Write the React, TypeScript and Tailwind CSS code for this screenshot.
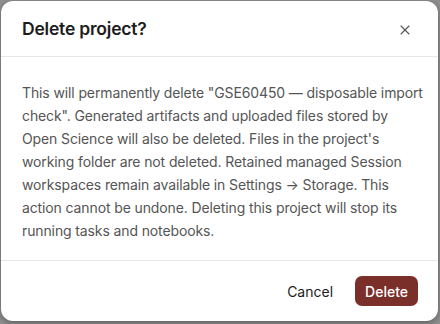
import { X } from "lucide-react";

const lines = [
  'This will permanently delete "GSE60450 — disposable import',
  'check". Generated artifacts and uploaded files stored by',
  "Open Science will also be deleted. Files in the project's",
  "working folder are not deleted. Retained managed Session",
  "workspaces remain available in Settings → Storage. This",
  "action cannot be undone. Deleting this project will stop its",
  "running tasks and notebooks.",
];

const App = () => {
  return (
    <div className="w-[440px] h-[324px] bg-[#8f8f8f] pt-px pl-px overflow-hidden font-['Inter',sans-serif]">
      <div className="w-[437px] h-[320px] bg-white rounded-[12px] flex flex-col shadow-[0_2px_6px_rgba(0,0,0,0.35)]">
        <div className="h-[56px] flex items-center justify-between pl-[21px] pr-[25px] pt-[2px] border-b border-[#e6e6e6] shrink-0">
          <h2 className="text-[17.5px] font-semibold text-[#1c1c1c] tracking-[-0.2px]">
            Delete project?
          </h2>
          <button className="text-[#555] flex items-center justify-center">
            <X size={16} strokeWidth={1.6} />
          </button>
        </div>

        <div className="pl-[21px] pr-[12px] pt-[24px] pb-[18px] border-b border-[#e6e6e6] shrink-0">
          <p className="text-[14px] leading-[23px] tracking-[-0.12px] text-[#555555]">
            {lines.map((line) => (
              <span key={line} className="block whitespace-nowrap">
                {line}
              </span>
            ))}
          </p>
        </div>

        <div className="flex-1 flex items-center justify-end gap-[22px] pr-[20px]">
          <button className="text-[14px] text-[#1c1c1c] px-0">Cancel</button>
          <button className="h-[30px] px-[10px] rounded-[7px] bg-[#7b2f2b] text-white text-[14px] font-medium">
            Delete
          </button>
        </div>
      </div>
    </div>
  );
};

export default App;
